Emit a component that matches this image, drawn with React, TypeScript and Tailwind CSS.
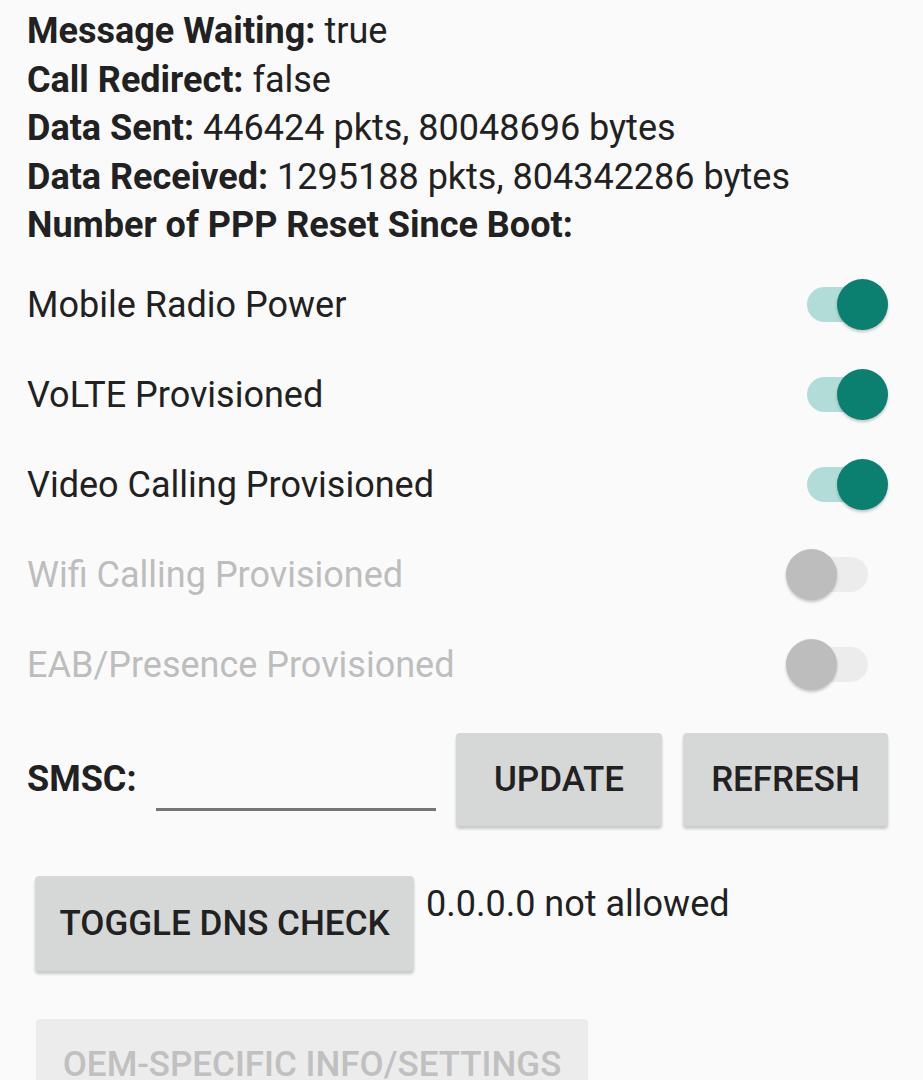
import { useState } from 'react'

type SwitchProps = { on: boolean; disabled?: boolean; onToggle?: () => void }

function Switch({ on, disabled, onToggle }: SwitchProps) {
  return (
    <button
      type="button"
      disabled={disabled}
      onClick={onToggle}
      className="relative w-[102px] h-[52px] shrink-0"
    >
      <span
        className={`absolute left-[21px] top-[8px] w-[61px] h-[35px] rounded-full ${
          disabled ? 'bg-[#ececec]' : on ? 'bg-[#b2dcd7]' : 'bg-[#bdbdbd]'
        }`}
      />
      <span
        className={`absolute top-0 w-[51px] h-[51px] rounded-full shadow-[0_2px_3px_rgba(0,0,0,0.22)] ${
          on ? 'left-[51px]' : 'left-0'
        } ${disabled ? 'bg-[#bdbdbd]' : on ? 'bg-[#0b7f70]' : 'bg-[#f1f1f1]'}`}
      />
    </button>
  )
}

const info: [string, string][] = [
  ['Message Waiting:', 'true'],
  ['Call Redirect:', 'false'],
  ['Data Sent:', '446424 pkts, 80048696 bytes'],
  ['Data Received:', '1295188 pkts, 804342286 bytes'],
  ['Number of PPP Reset Since Boot:', ''],
]

export default function App() {
  const [toggles, setToggles] = useState([
    { label: 'Mobile Radio Power', on: true, disabled: false },
    { label: 'VoLTE Provisioned', on: true, disabled: false },
    { label: 'Video Calling Provisioned', on: true, disabled: false },
    { label: 'Wifi Calling Provisioned', on: false, disabled: true },
    { label: 'EAB/Presence Provisioned', on: false, disabled: true },
  ])
  const [smsc, setSmsc] = useState('')

  // buttons use the medium cut of Roboto, a bit lighter than the bold labels
  const btn =
    "rounded-[4px] bg-[#d6d7d7] text-[#212121] font-['Roboto_Medium','Roboto',sans-serif] font-medium text-[35px] leading-none shadow-[0_3px_3px_rgba(0,0,0,0.2)] active:bg-[#c4c5c5]"

  return (
    <div className="min-h-screen h-[1080px] overflow-hidden bg-[#fafafa] text-[#212121] font-['Roboto','Noto_Sans',sans-serif]">
      <div className="pl-[27px] pt-[7px] text-[36px] leading-[48.5px]">
        {info.map(([k, v]) => (
          <div key={k} className="whitespace-nowrap">
            <span className="font-bold">{k}</span> {v}
          </div>
        ))}
      </div>

      <div className="mt-[10px] pl-[27px] pr-[35px]">
        {toggles.map((t, i) => (
          <div key={t.label} className="h-[90px] flex items-center justify-between">
            <span className={`text-[36px] ${t.disabled ? 'text-[#bdbdbd]' : 'text-[#212121]'}`}>{t.label}</span>
            <Switch
              on={t.on}
              disabled={t.disabled}
              onToggle={() =>
                setToggles(toggles.map((x, j) => (j === i ? { ...x, on: !x.on } : x)))
              }
            />
          </div>
        ))}
      </div>

      <div className="mt-[23px] flex items-center pl-[27px] pr-[35px]">
        <span className="font-bold text-[36px] w-[129px]">SMSC:</span>
        <input
          value={smsc}
          onChange={(e) => setSmsc(e.target.value)}
          className="w-[280px] h-[50px] mt-[14px] bg-transparent border-b-[3px] border-[#757575] outline-none text-[36px]"
        />
        <button type="button" className={`${btn} ml-[20px] w-[206px] h-[93px]`}>UPDATE</button>
        <button type="button" className={`${btn} ml-[21px] w-[205px] h-[93px]`}>REFRESH</button>
      </div>

      <div className="mt-[50px] flex items-start pl-[35px]">
        <button type="button" className={`${btn} w-[379px] h-[95px]`}>TOGGLE DNS CHECK</button>
        <span className="ml-[12px] mt-[4px] text-[36px] leading-[48px] whitespace-nowrap">0.0.0.0 not allowed</span>
      </div>

      <div className="mt-[48px] pl-[36px]">
        <button
          type="button"
          disabled
          className="rounded-[4px] bg-[#ececec] text-[#c0c0c0] font-['Roboto_Medium','Roboto',sans-serif] font-medium text-[35px] leading-none w-[552px] h-[93px] pt-[28px] flex justify-center"
        >
          OEM-SPECIFIC INFO/SETTINGS
        </button>
      </div>
    </div>
  )
}
